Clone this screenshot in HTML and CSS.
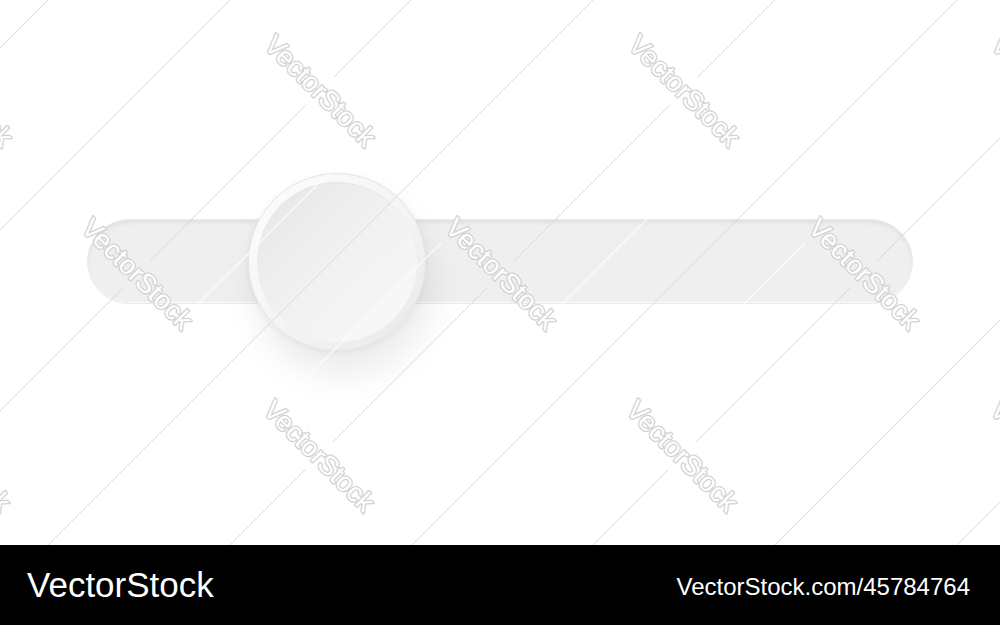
FILE: index.html
```html
<!DOCTYPE html>
<html lang="en">
<head>
    <meta charset="UTF-8">
    <meta name="viewport" content="width=device-width, initial-scale=1.0">
    <link rel="stylesheet" href="styles.css">
    <title>Slider Toggle</title>
</head>
<body>
    <div class="stage">
        <div class="slider">
            <div class="knob">
                <div class="knob-face"></div>
            </div>
        </div>

        <!-- diagonal stock watermark drawn over the artwork -->
        <svg class="watermark" viewBox="0 0 1000 545" width="1000" height="545">
            <defs>
                <mask id="gaps">
                    <rect width="1000" height="545" fill="#fff"/>
                    <g fill="#000">
                        <rect x="245" y="72" width="150" height="38" transform="rotate(45 320 91)"/>
                        <rect x="609" y="72" width="150" height="38" transform="rotate(45 684 91)"/>
                        <rect x="-118" y="72" width="150" height="38" transform="rotate(45 -43 91)"/>
                        <rect x="972" y="72" width="150" height="38" transform="rotate(45 1047 91)"/>
                        <rect x="62" y="255" width="150" height="38" transform="rotate(45 137 274)"/>
                        <rect x="426" y="255" width="150" height="38" transform="rotate(45 501 274)"/>
                        <rect x="789" y="255" width="150" height="38" transform="rotate(45 864 274)"/>
                        <rect x="-120" y="437" width="150" height="38" transform="rotate(45 -45 456)"/>
                        <rect x="244" y="437" width="150" height="38" transform="rotate(45 319 456)"/>
                        <rect x="607" y="437" width="150" height="38" transform="rotate(45 682 456)"/>
                        <rect x="971" y="437" width="150" height="38" transform="rotate(45 1046 456)"/>
                    </g>
                </mask>
            </defs>
            <g mask="url(#gaps)">
                <g class="wm-line">
                    <line x1="-552" y1="600" x2="98" y2="-50"/>
                    <line x1="-370" y1="600" x2="280" y2="-50"/>
                    <line x1="-189" y1="600" x2="461" y2="-50"/>
                    <line x1="-7" y1="600" x2="643" y2="-50"/>
                    <line x1="175" y1="600" x2="825" y2="-50"/>
                    <line x1="357" y1="600" x2="1007" y2="-50"/>
                    <line x1="538" y1="600" x2="1188" y2="-50"/>
                    <line x1="720" y1="600" x2="1370" y2="-50"/>
                    <line x1="902" y1="600" x2="1552" y2="-50"/>
                </g>
                <g class="wm-glint">
                    <line x1="-461" y1="600" x2="189" y2="-50"/>
                    <line x1="-280" y1="600" x2="370" y2="-50"/>
                    <line x1="-98" y1="600" x2="552" y2="-50"/>
                    <line x1="84" y1="600" x2="734" y2="-50"/>
                    <line x1="266" y1="600" x2="916" y2="-50"/>
                    <line x1="448" y1="600" x2="1098" y2="-50"/>
                    <line x1="629" y1="600" x2="1279" y2="-50"/>
                    <line x1="811" y1="600" x2="1461" y2="-50"/>
                </g>
            </g>
            <g class="wm-text">
                <text x="320" y="91" transform="rotate(45 320 91)">VectorStock</text>
                <text x="684" y="91" transform="rotate(45 684 91)">VectorStock</text>
                <text x="-43" y="91" transform="rotate(45 -43 91)">VectorStock</text>
                <text x="1047" y="91" transform="rotate(45 1047 91)">VectorStock</text>
                <text x="137" y="274" transform="rotate(45 137 274)">VectorStock</text>
                <text x="501" y="274" transform="rotate(45 501 274)">VectorStock</text>
                <text x="864" y="274" transform="rotate(45 864 274)">VectorStock</text>
                <text x="-45" y="456" transform="rotate(45 -45 456)">VectorStock</text>
                <text x="319" y="456" transform="rotate(45 319 456)">VectorStock</text>
                <text x="682" y="456" transform="rotate(45 682 456)">VectorStock</text>
                <text x="1046" y="456" transform="rotate(45 1046 456)">VectorStock</text>
            </g>
        </svg>
    </div>

    <div class="footer">
        <span class="brand">VectorStock</span>
        <span class="ref">VectorStock.com/45784764</span>
    </div>
</body>
</html>
```

FILE: styles.css
```css
body {
    margin: 0;
    padding: 0;
    width: 1000px;
    height: 625px;
    overflow: hidden;
    background-color: #fff;
    font-family: "Liberation Sans", Arial, sans-serif;
}

.stage {
    position: relative;
    height: 545px;
    box-sizing: border-box;
    padding: 219px 0 0 87px;
    display: flex;
    align-items: flex-start;
    background-color: #fff;
}

/* the pill-shaped groove */
.slider {
    position: relative;
    width: 826px;
    height: 85px;
    box-sizing: border-box;
    border-radius: 43px;
    background-color: #efefef;
    border: 1px solid #e9e9e9;
    box-shadow: inset 0 3px 4px rgba(0, 0, 0, 0.06), inset 0 -1px 1px rgba(255, 255, 255, 0.8);
}

/* round handle sitting on the groove */
.knob {
    position: absolute;
    left: 160px;
    top: -47px;
    width: 178px;
    height: 178px;
    box-sizing: border-box;
    border-radius: 50%;
    border: 1px solid #e3e3e3;
    background: linear-gradient(135deg, #fdfdfd 0%, #f4f4f4 55%, #e8e8e8 100%);
    box-shadow: 6px 24px 34px rgba(0, 0, 0, 0.08), 0 2px 6px rgba(0, 0, 0, 0.05);
    display: flex;
    align-items: center;
    justify-content: center;
}

.knob-face {
    width: 160px;
    height: 160px;
    border-radius: 50%;
    background: linear-gradient(135deg, #e6e6e6 0%, #f1f1f1 50%, #fafafa 100%);
    box-shadow: inset 0 1px 1px rgba(0, 0, 0, 0.03);
}

.watermark {
    position: absolute;
    left: 0;
    top: 0;
    pointer-events: none;
}

.wm-line line {
    stroke: #d9d9d9;
    stroke-width: 1;
}

.wm-glint line {
    stroke: rgba(255, 255, 255, 0.85);
    stroke-width: 1.2;
}

/* hollow lettering: stroke painted under a white fill */
.wm-text text {
    font-family: "Liberation Sans", Arial, sans-serif;
    font-size: 27px;
    text-anchor: middle;
    dominant-baseline: central;
    fill: #fff;
    stroke: #d2d2d2;
    stroke-width: 2.6;
    stroke-linejoin: round;
    paint-order: stroke;
}

.footer {
    height: 80px;
    background-color: #000;
    color: #fff;
    display: flex;
    justify-content: space-between;
    align-items: flex-start;
    padding: 0 30px 0 27px;
}

.brand {
    font-size: 35px;
    line-height: 1;
    margin-top: 22px;
}

.ref {
    font-size: 24px;
    line-height: 1;
    margin-top: 30px;
}
```
